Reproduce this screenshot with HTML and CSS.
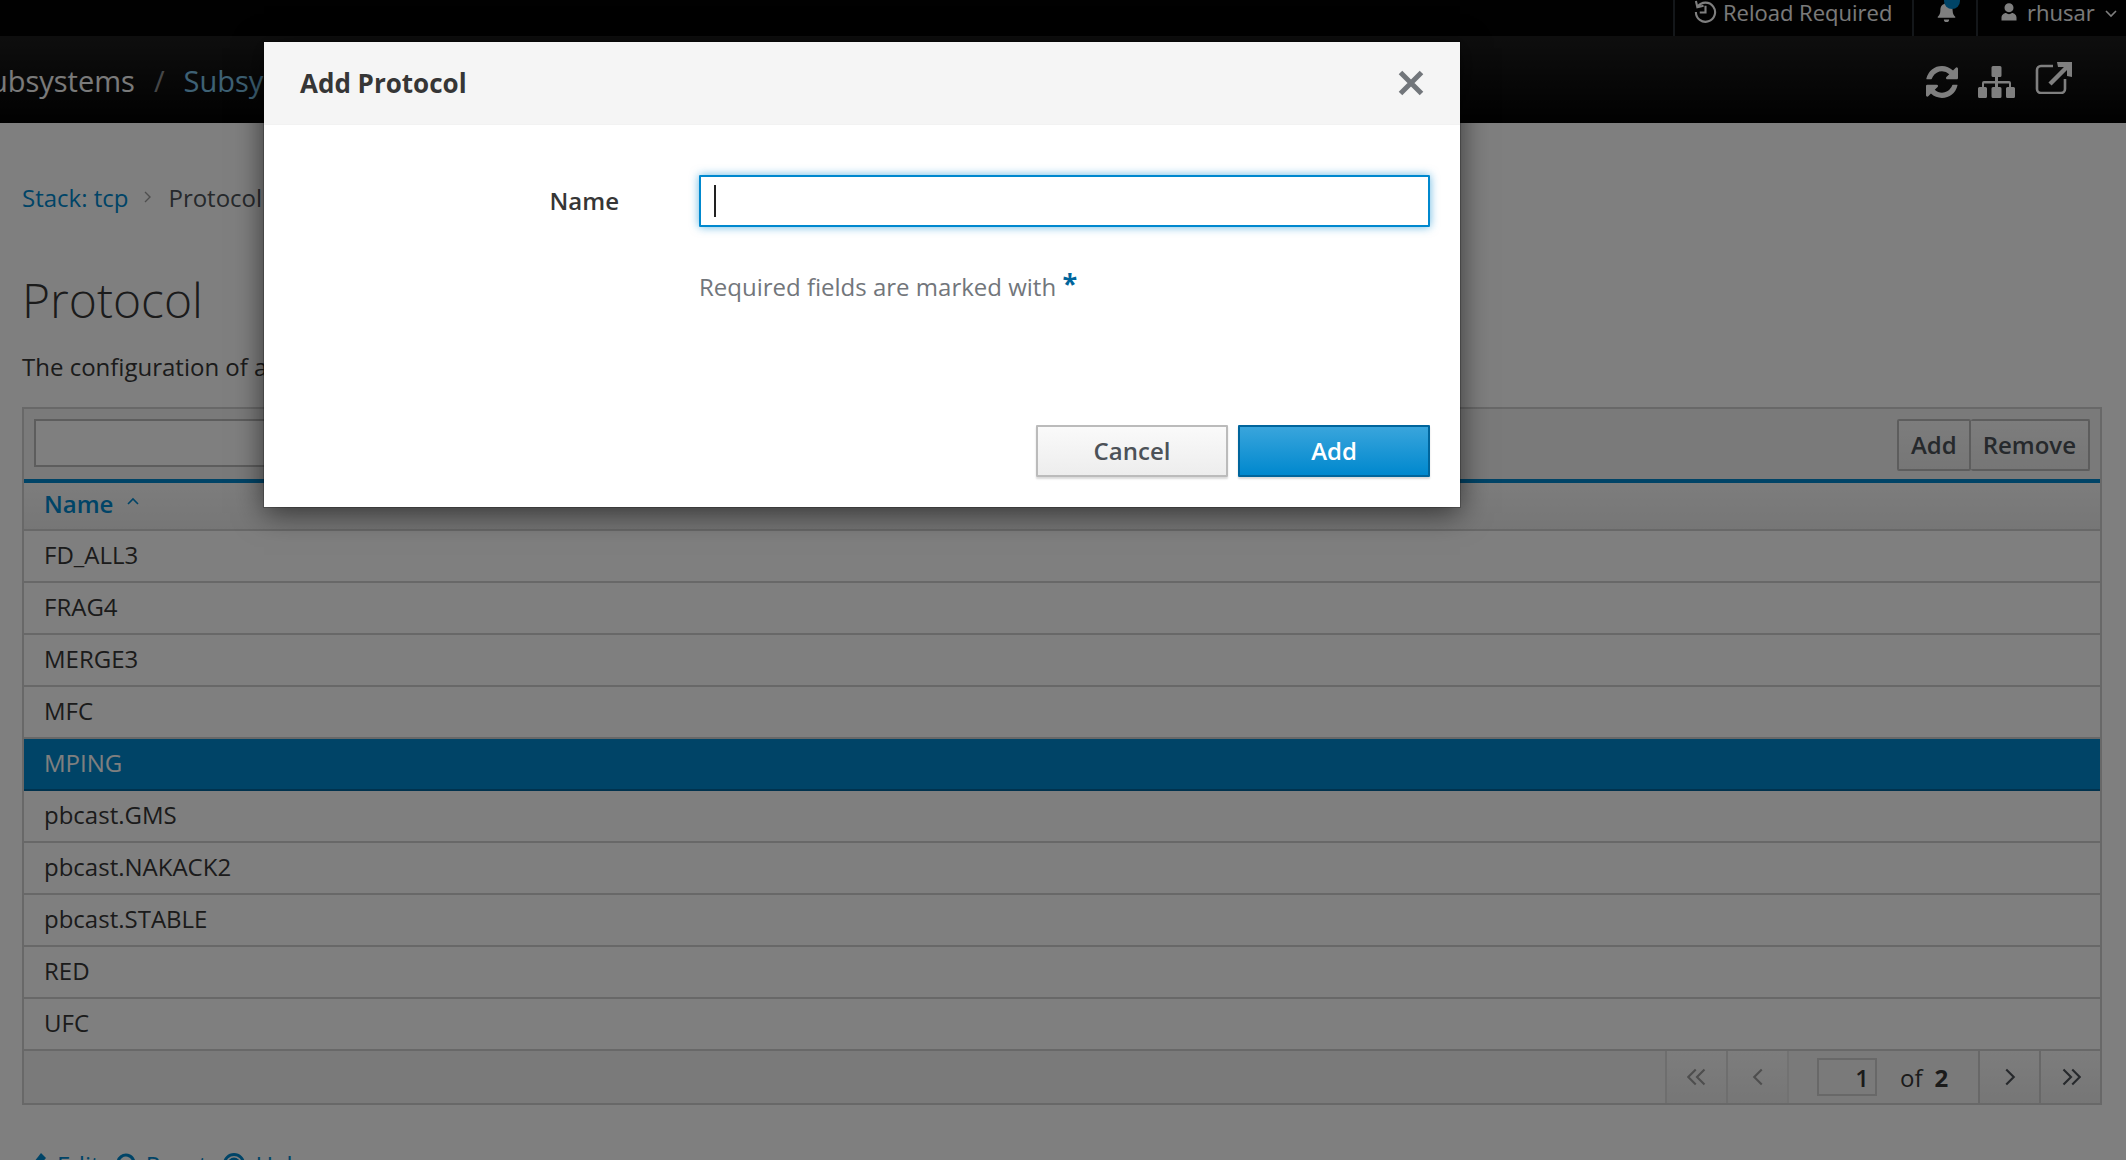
FILE: index.html
```html
<!DOCTYPE html>
<html lang="en">
<head>
  <meta charset="UTF-8" />
  <title>Add Protocol</title>
  <link rel="stylesheet" href="styles.css">
</head>
<body>
  <div class="utility-bar">
    <div class="utility-item utility-reload">
      <svg class="icon-history" viewBox="0 0 24 24"><path d="M2 1l1.500 6.500 6.500-1.500M3.800 7a10 10 0 1 1-1.800 5.500M12 6v7H6" /></svg>
      <span>Reload Required</span>
    </div>
    <div class="utility-item utility-bell">
      <svg class="icon-bell" viewBox="0 0 24 24"><path d="M12 1c-1 0-2 1-2 2-4 1-5 4-5 8 0 4-2 6-3 7v1h20v-1c-1-1-3-3-3-7 0-4-1-7-5-8 0-1-1-2-2-2zM9 21a3 3 0 0 0 6 0z" /></svg>
      <span class="bell-dot"></span>
    </div>
    <div class="utility-item utility-user">
      <svg class="icon-user" viewBox="0 0 24 24"><path d="M12 1a6 6 0 0 1 6 6c0 3-2 6-6 6s-6-3-6-6a6 6 0 0 1 6-6zM2 24v-4c0-3 3-6 6-6 1 1 2.500 1.500 4 1.500s3-.5 4-1.500c3 0 6 3 6 6v4z" /></svg>
      <span>rhusar</span>
      <svg class="icon-chevron" viewBox="0 0 12 8"><path d="M1 1l5 5 5-5" /></svg>
    </div>
  </div>

  <nav class="nav-bar">
    <div class="nav-path">
      <span class="nav-muted">Subsystems</span>
      <span class="nav-sep">/</span>
      <a class="nav-link">Subsystem</a>
    </div>
    <div class="nav-tools">
      <svg class="tool-refresh" viewBox="128 128 1536 1536"><path d="M1639 1056q0 5-1 7-64 268-268 434.500t-478 166.500q-146 0-282.500-55t-243.500-157l-129 129q-19 19-45 19t-45-19-19-45v-448q0-26 19-45t45-19h448q26 0 45 19t19 45-19 45l-137 137q71 66 161 102t187 36q134 0 250-65t186-179q11-17 53-117 8-23 30-23h192q13 0 22.500 9.500t9.500 22.500zm25-800v448q0 26-19 45t-45 19h-448q-26 0-45-19t-19-45 19-45l138-138q-148-137-349-137-134 0-250 65t-186 179q-11 17-53 117-8 23-30 23h-199q-13 0-22.500-9.500t-9.500-22.500v-7q65-268 270-434.500t480-166.500q146 0 284 55.500t245 156.500l130-129q19-19 45-19t45 19 19 45z" /></svg>
      <svg class="tool-sitemap" viewBox="0 0 37 32"><path d="M15 0h7a1.500 1.500 0 0 1 1.500 1.500v8A1.500 1.500 0 0 1 22 11h-2v4h11a2 2 0 0 1 2 2v4h2.500a1.500 1.500 0 0 1 1.500 1.500v8a1.500 1.500 0 0 1-1.500 1.500h-6a1.500 1.500 0 0 1-1.500-1.500v-8a1.500 1.500 0 0 1 1.500-1.500h1.500v-3.500H20V21h2a1.500 1.500 0 0 1 1.500 1.500v8A1.500 1.500 0 0 1 22 32h-7a1.500 1.500 0 0 1-1.500-1.500v-8A1.500 1.500 0 0 1 15 21h2v-3.500H6V21h1.500A1.500 1.500 0 0 1 9 22.500v8A1.500 1.500 0 0 1 7.500 32h-6A1.500 1.500 0 0 1 0 30.500v-8A1.500 1.500 0 0 1 1.500 21H4v-4a2 2 0 0 1 2-2h11v-4h-2a1.500 1.500 0 0 1-1.500-1.500v-8A1.500 1.500 0 0 1 15 0z" /></svg>
      <svg class="tool-open" viewBox="0 0 37 32"><path d="M18 4H6a4 4 0 0 0-4 4v19a4 4 0 0 0 4 4h20a4 4 0 0 0 4-4V17" /><path class="open-arrow" d="M15 22L33 4" /><path class="open-head" d="M22 0h15v15l-5-1V5h-9z" /></svg>
    </div>
  </nav>

  <main class="content">
    <div class="breadcrumb">
      <a class="link">Stack: tcp</a>
      <svg class="crumb-sep" viewBox="0 0 8 12"><path d="M1 1l5 5-5 5" /></svg>
      <span>Protocol</span>
    </div>
    <h1>Protocol</h1>
    <p class="lead">The configuration of a protocol.</p>

    <div class="table-box">
      <div class="toolbar">
        <input class="filter" type="text">
        <div class="btn-group">
          <button class="btn">Add</button>
          <button class="btn">Remove</button>
        </div>
      </div>
      <div class="table-head">Name
        <svg class="sort-caret" viewBox="0 0 12 8"><path d="M1 7l5-5 5 5" /></svg>
      </div>
      <div class="row">FD_ALL3</div>
      <div class="row">FRAG4</div>
      <div class="row">MERGE3</div>
      <div class="row">MFC</div>
      <div class="row row-selected">MPING</div>
      <div class="row">pbcast.GMS</div>
      <div class="row">pbcast.NAKACK2</div>
      <div class="row">pbcast.STABLE</div>
      <div class="row">RED</div>
      <div class="row">UFC</div>
      <div class="pager">
        <div class="pager-btn is-off"><svg viewBox="0 0 16 14"><path d="M7 1L1 7l6 6M14 1L8 7l6 6" /></svg></div>
        <div class="pager-btn is-off"><svg viewBox="0 0 16 14"><path d="M11 1L5 7l6 6" /></svg></div>
        <div class="pager-info">
          <span class="page-input">1</span>
          <span>of</span>
          <b>2</b>
        </div>
        <div class="pager-btn"><svg viewBox="0 0 16 14"><path d="M5 1l6 6-6 6" /></svg></div>
        <div class="pager-btn"><svg viewBox="0 0 16 14"><path d="M2 1l6 6-6 6M9 1l6 6-6 6" /></svg></div>
      </div>
    </div>

    <div class="footer-links">
      <a class="link link-edit"><svg class="icon-pencil" viewBox="0 0 14 20"><path d="M8 0l5 5-8 9-5 1 1-6z" /></svg>Edit</a>
      <a class="link"><svg class="icon-reset" viewBox="0 0 20 20"><path d="M2 10a8 8 0 1 1 3 6.300" /></svg>Reset</a>
      <a class="link"><svg class="icon-help" viewBox="0 0 22 22"><circle cx="11" cy="11" r="9.500" /><circle cx="11" cy="11" r="5" /></svg>Help</a>
    </div>
  </main>

  <div class="backdrop"></div>

  <div class="modal">
    <div class="modal-head">
      <h2>Add Protocol</h2>
      <svg class="modal-close" viewBox="0 0 26 26"><path d="M2.500 2.500l21 21M23.500 2.500l-21 21" /></svg>
    </div>
    <div class="modal-body">
      <div class="form-row">
        <label>Name</label>
        <div class="fake-input"><span class="caret"></span></div>
      </div>
      <p class="required-note">Required fields are marked with <span class="star">*</span></p>
    </div>
    <div class="modal-foot">
      <button class="modal-btn">Cancel</button>
      <button class="modal-btn modal-btn-primary">Add</button>
    </div>
  </div>
</body>
</html>
```

FILE: styles.css
```css
* {
  margin: 0;
  padding: 0;
  box-sizing: border-box;
}
html, body {
  height: 1160px;
  overflow: hidden;
}
body {
  background: #fff;
  font-family: "Open Sans", sans-serif;
  font-size: 24px;
  color: #363636;
  position: relative;
}
svg {
  display: block;
  flex: none;
}

/* Top bars */
.utility-bar {
  height: 36px;
  background: #030303;
  display: flex;
  justify-content: flex-end;
  color: #f5f5f5;
  font-size: 22px;
  line-height: 24px;
  white-space: nowrap;
}
.utility-item {
  display: flex;
  align-items: flex-start;
  border-left: 2px solid #292e34;
}
.utility-reload {
  width: 239px;
  padding-left: 19px;
  gap: 6px;
}
.icon-history {
  width: 23px;
  height: 23px;
  fill: none;
  stroke: #fff;
  stroke-width: 2.2;
}
.utility-bell {
  width: 64px;
  position: relative;
}
.icon-bell {
  width: 21px;
  height: 23px;
  fill: #fff;
  margin-left: 22px;
}
.bell-dot {
  position: absolute;
  left: 30px;
  top: -7px;
  width: 16px;
  height: 16px;
  border-radius: 50%;
  background: #0088ce;
}
.utility-user {
  width: 150px;
  padding-left: 22px;
  gap: 9px;
}
.icon-user {
  width: 18px;
  height: 21px;
  fill: #fff;
  margin-top: 1px;
}
.icon-chevron {
  width: 12px;
  height: 8px;
  fill: none;
  stroke: #fff;
  stroke-width: 1.6;
  margin: 10px 0 0 1px;
}
.nav-bar {
  height: 87px;
  background: linear-gradient(#1d1d1d, #030303);
  display: flex;
  align-items: center;
  justify-content: space-between;
  font-size: 29px;
  padding-right: 54px;
}
.nav-path {
  display: flex;
  align-items: center;
  gap: 19px;
  margin: 2px 0 0 -26px;
}
.nav-muted {
  color: #f5f5f5;
}
.nav-sep {
  color: #8b8d8f;
}
.nav-link {
  color: #7dc3e8;
}
.nav-tools {
  display: flex;
  align-items: center;
  gap: 20px;
}
.tool-refresh {
  width: 32px;
  height: 32px;
  fill: #fff;
  margin-top: 4px;
}
.tool-sitemap {
  width: 37px;
  height: 32px;
  fill: #fff;
  margin-top: 4px;
}
.tool-open {
  width: 37px;
  height: 32px;
  fill: none;
  stroke: #fff;
  stroke-width: 2.6;
  margin-top: -3px;
}
.open-arrow {
  stroke-width: 4.5;
}
.open-head {
  fill: #fff;
  stroke: none;
}

/* Page */
.content {
  padding: 0 24px 0 22px;
}
.breadcrumb {
  display: flex;
  align-items: center;
  gap: 16px;
  margin-top: 58px;
  height: 32px;
  color: #4d5258;
}
.link {
  color: #0088ce;
}
.crumb-sep {
  width: 8px;
  height: 12px;
  fill: none;
  stroke: #9c9c9c;
  stroke-width: 1.4;
}
h1 {
  font-weight: 300;
  font-size: 48px;
  line-height: 64px;
  margin-top: 55px;
  color: #363636;
}
.lead {
  line-height: 32px;
  margin-top: 19px;
}
.table-box {
  margin-top: 24px;
  border: 2px solid #d1d1d1;
}
.toolbar {
  height: 70px;
  background: #f5f5f5;
  display: flex;
  justify-content: space-between;
  align-items: flex-start;
  padding: 10px 10px 0;
}
.filter {
  width: 500px;
  height: 48px;
  border: 2px solid #bbb;
  background: #fff;
}
.btn-group {
  display: flex;
}
.btn {
  height: 52px;
  padding: 0 12px 2px;
  border: 2px solid #bbb;
  border-radius: 2px;
  background: linear-gradient(#fafafa, #ededed);
  font: 600 24px "Open Sans", sans-serif;
  color: #4d5258;
}
.btn + .btn {
  border-left: 0;
}
.table-head {
  height: 52px;
  border-top: 4px solid #0088ce;
  border-bottom: 2px solid #d1d1d1;
  background: linear-gradient(#fafafa, #ededed);
  display: flex;
  align-items: center;
  gap: 14px;
  padding: 0 0 6px 20px;
  font-weight: 600;
  color: #0088ce;
}
.sort-caret {
  width: 12px;
  height: 8px;
  fill: none;
  stroke: #0088ce;
  stroke-width: 1.6;
  margin-top: -4px;
}
.row {
  height: 52px;
  line-height: 48px;
  padding-left: 20px;
  background: #fff;
  border-bottom: 2px solid #d1d1d1;
}
.row-selected {
  background: #0088ce;
  color: #fff;
  border-bottom-color: #00659c;
}
.pager {
  height: 52px;
  display: flex;
  justify-content: flex-end;
  background: #f5f5f5;
}
.pager-btn {
  width: 61px;
  display: flex;
  align-items: center;
  justify-content: center;
  border-left: 2px solid #d1d1d1;
  background: linear-gradient(#fafafa, #ededed);
}
.pager-btn svg {
  width: 20px;
  height: 18px;
  fill: none;
  stroke: #4d5258;
  stroke-width: 1.7;
}
.is-off {
  border-left-color: #ddd;
}
.is-off svg {
  stroke: #9c9c9c;
}
.pager-info {
  width: 191px;
  display: flex;
  align-items: center;
  gap: 23px;
  padding-left: 28px;
  border-left: 2px solid #e4e4e4;
}
.pager-info b {
  margin-left: -11px;
}
.page-input {
  width: 60px;
  height: 38px;
  border: 2px solid #d1d1d1;
  text-align: right;
  padding-right: 6px;
  font-weight: 600;
  line-height: 36px;
}
.footer-links {
  display: flex;
  gap: 16px;
  margin-top: 44px;
  padding-left: 11px;
}
.footer-links .link {
  display: flex;
  align-items: flex-start;
  gap: 10px;
  line-height: 32px;
}
.icon-pencil {
  width: 14px;
  height: 20px;
  fill: #0088ce;
  margin-top: 4px;
}
.icon-reset {
  width: 20px;
  height: 20px;
  fill: none;
  stroke: #0088ce;
  stroke-width: 3;
  margin-top: 4px;
}
.icon-help {
  width: 22px;
  height: 22px;
  fill: none;
  stroke: #0088ce;
  stroke-width: 3;
  margin-top: 4px;
}

/* Modal */
.backdrop {
  position: absolute;
  inset: 0;
  background: rgba(0, 0, 0, 0.5);
}
.modal {
  position: absolute;
  left: 264px;
  top: 42px;
  width: 1196px;
  height: 465px;
  background: #fff;
  box-shadow: 0 0 0 1px rgba(0, 0, 0, 0.2), 0 6px 28px rgba(0, 0, 0, 0.6);
  display: flex;
  flex-direction: column;
}
.modal-head {
  height: 83px;
  background: #f5f5f5;
  display: flex;
  align-items: center;
  justify-content: space-between;
  padding: 0 36px;
  border-bottom: 1px solid #f2f2f2;
}
.modal-head h2 {
  font-size: 26px;
  font-weight: 700;
}
.modal-close {
  width: 26px;
  height: 26px;
  fill: none;
  stroke: #72767b;
  stroke-width: 5;
}
.modal-body {
  flex: 1;
  padding: 50px 30px 0 0;
}
.form-row {
  display: flex;
  align-items: center;
}
.form-row label {
  width: 355px;
  text-align: right;
  font-weight: 600;
  margin: -2px 80px 0 0;
}
.fake-input {
  flex: 1;
  height: 52px;
  border: 2px solid #0088ce;
  border-radius: 1px;
  box-shadow: 0 0 10px rgba(0, 136, 206, 0.6);
  padding: 8px 0 0 13px;
}
.caret {
  display: block;
  width: 1.500px;
  height: 32px;
  background: #222;
}
.required-note {
  margin: 43px 0 0 435px;
  color: #72767b;
}
.star {
  color: #00659c;
  font-weight: 700;
  font-size: 27px;
  line-height: 20px;
  vertical-align: 3px;
}
.modal-foot {
  display: flex;
  justify-content: flex-end;
  gap: 10px;
  padding: 0 30px 30px 0;
}
.modal-btn {
  width: 192px;
  height: 52px;
  padding-bottom: 2px;
  border: 2px solid #bbb;
  border-radius: 1px;
  background: linear-gradient(#fafafa, #ededed);
  font: 600 24px "Open Sans", sans-serif;
  color: #4d5258;
  box-shadow: 0 2px 2px rgba(0, 0, 0, 0.15);
}
.modal-btn-primary {
  background: linear-gradient(#39a5dc, #0088ce);
  border-color: #00659c;
  color: #fff;
}
```
